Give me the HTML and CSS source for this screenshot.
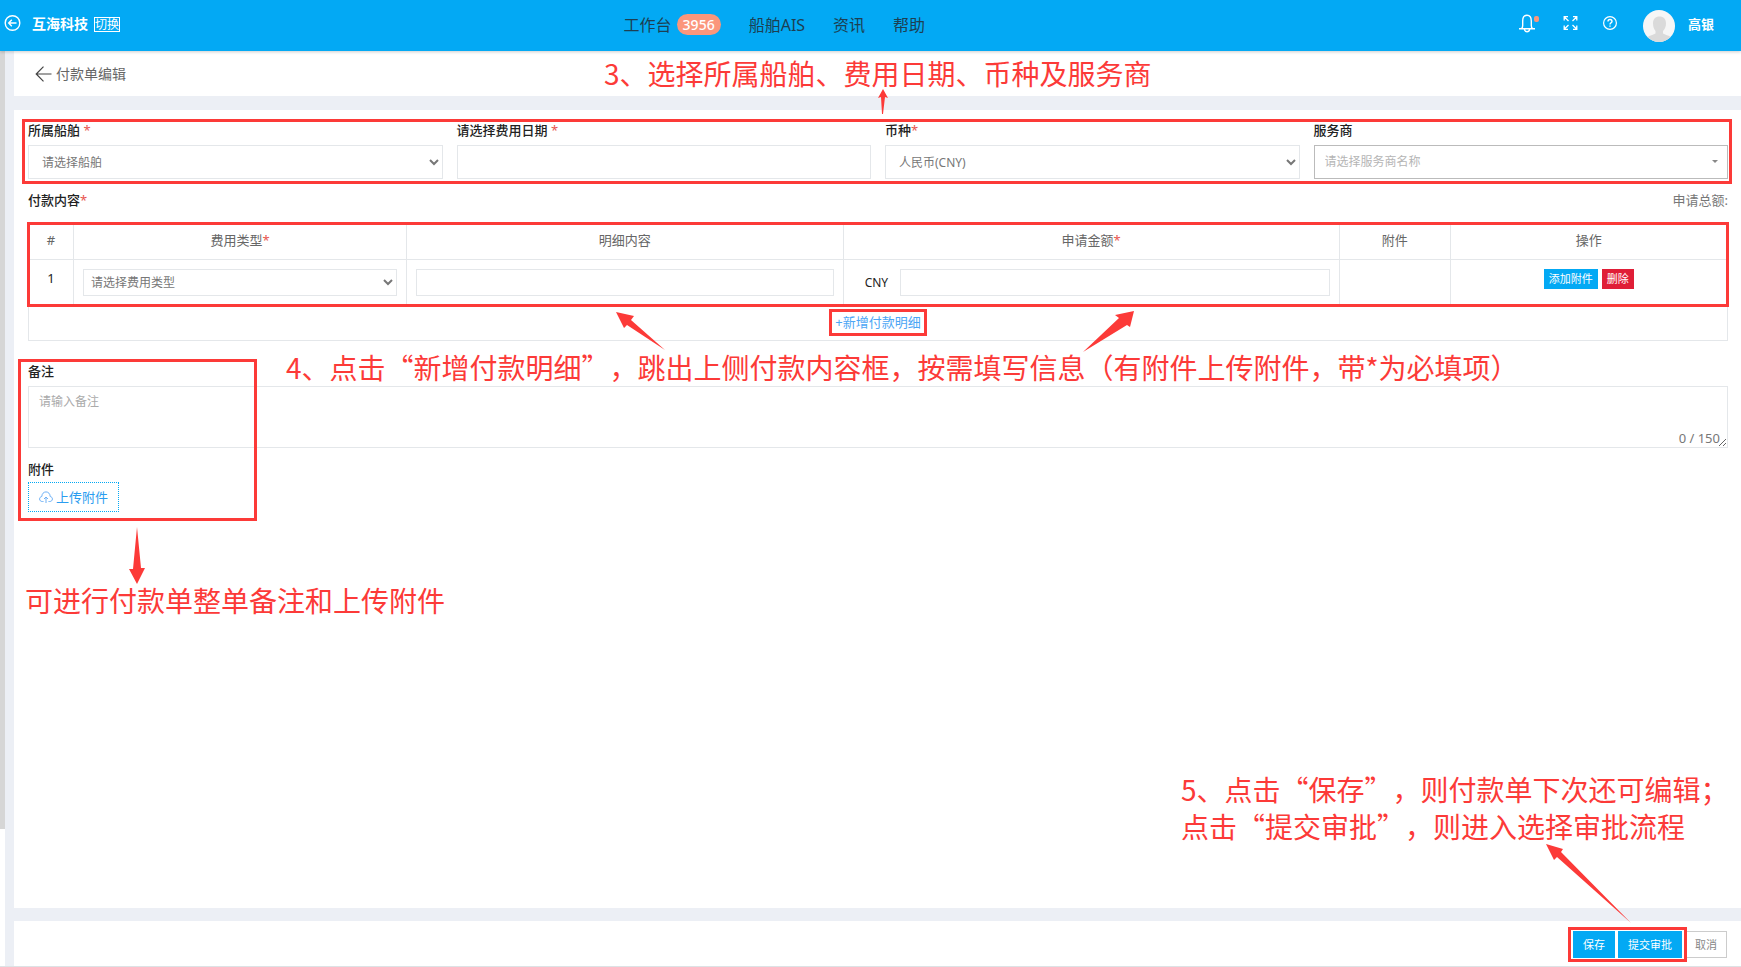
FILE: index.html
```html
<!DOCTYPE html>
<html lang="zh-CN">
<head>
<meta charset="utf-8">
<meta name="viewport" content="width=device-width, initial-scale=1">
<title>付款单编辑</title>
<link rel="stylesheet" href="styles.css">
</head>
<body>
<header class="topbar">
  <div class="brand">
    <button class="icon-btn" type="button" aria-label="收起菜单">
      <svg width="18" height="18" viewBox="0 0 18 18" fill="none" stroke="#fff" stroke-width="1.4"><circle cx="8.500" cy="9" r="7.3"/><path d="M12.500 9H5M7.800 5.800L4.700 9l3.100 3.2"/></svg>
    </button>
    <strong class="brand-name">互海科技</strong>
    <a class="switch" href="#">切换</a>
  </div>
  <nav class="nav">
    <a href="#">工作台 <span class="badge">3956</span></a>
    <a href="#">船舶AIS</a>
    <a href="#">资讯</a>
    <a href="#">帮助</a>
  </nav>
  <div class="tools">
    <button class="icon-btn" type="button" aria-label="通知">
      <svg width="20" height="20" viewBox="0 0 20 20" fill="none" stroke="#fff" stroke-width="1.4"><path d="M0 15.800h16M2.500 15.800c1-1 1.200-2 1.200-3.300V8C3.700 4.500 5.300 2.200 8 2.200s4.300 2.300 4.300 5.800v4.500c0 1.300.2 2.300 1.200 3.300M5.300 16.100c.3 1.700 1.300 2.700 2.700 2.700s2.400-1 2.700-2.700"/><rect x="15" y="3" width="5" height="6" rx="2" fill="#fb967b" stroke="none"/></svg>
    </button>
    <button class="icon-btn" type="button" aria-label="全屏">
      <svg width="16" height="16" viewBox="0 0 16 16" fill="none" stroke="#fff" stroke-width="1.300"><path d="M1.200 5.500V1.700H5M1.200 1.700L5.500 6M10 1.700h3.800v3.800M13.800 1.700L9.500 6M1.200 10.500v3.800H5M1.200 14.300L5.500 10M13.800 10.500v3.800H10M13.800 14.300L9.500 10"/></svg>
    </button>
    <button class="icon-btn" type="button" aria-label="帮助">
      <svg width="16" height="16" viewBox="0 0 16 16" fill="none" stroke="#fff" stroke-width="1.200"><circle cx="7" cy="8" r="6.400"/><path d="M5 6.600C5 5.300 5.800 4.500 7 4.500s2 .8 2 1.900c0 1.300-2 1.500-2 3.100M7 10.500v1.300" stroke-width="1.400"/></svg>
    </button>
    <a class="user" href="#">
      <svg width="32" height="32" viewBox="0 0 32 32"><defs><clipPath id="face"><circle cx="16" cy="16" r="16"/></clipPath></defs><g clip-path="url(#face)"><path fill="#f6f6f6" d="M0 0h32v32H0z"/><path fill="#dadada" d="M16.500 6.500c4 0 6.500 2.600 6.500 6.700 0 3.500-1.200 6-3 7.800v2.500c2.500 1.500 7 2 8.500 4.500V32H4v-4c1.500-2.500 6-3 8.500-4.500V21c-1.500-1.800-2.500-4.300-2.500-7.800 0-4.100 2.500-6.700 6.500-6.700z"/></g></svg>
      <strong>高银</strong>
    </a>
  </div>
</header>

<div class="workspace">
  <div class="rail"><div class="rail-thumb"></div></div>
  <div class="page">
    <div class="titlebar">
      <a class="back" href="#">
        <svg width="17" height="16" viewBox="0 0 17 16" fill="none" stroke="#444" stroke-width="1.200"><path d="M16.500 8H1.200M8.500.6L1.200 8l7.300 7.400"/></svg>
        <span>付款单编辑</span>
      </a>
    </div>

    <main class="card">
      <form id="payment">
        <div class="fields ring ring-fields">
          <div class="field">
            <label for="ship">所属船舶 <i>*</i></label>
            <select id="ship" class="control"><option>请选择船舶</option></select>
          </div>
          <div class="field">
            <label for="date">请选择费用日期 <i>*</i></label>
            <input id="date" class="control" type="text">
          </div>
          <div class="field">
            <label for="currency">币种<i>*</i></label>
            <select id="currency" class="control"><option>人民币(CNY)</option></select>
          </div>
          <div class="field">
            <label for="vendor">服务商</label>
            <div class="combo">
              <select id="vendor" class="control"><option>请选择服务商名称</option></select>
              <span class="caret"></span>
            </div>
          </div>
        </div>

        <div class="section-head">
          <h2>付款内容<i>*</i></h2>
          <span>申请总额:</span>
        </div>

        <div class="ring ring-table">
          <table class="items">
            <colgroup><col class="c-no"><col class="c-type"><col class="c-detail"><col class="c-amount"><col class="c-file"><col class="c-action"></colgroup>
            <thead>
              <tr><th>#</th><th>费用类型<i>*</i></th><th>明细内容</th><th>申请金额<i>*</i></th><th>附件</th><th>操作</th></tr>
            </thead>
            <tbody>
              <tr>
                <td class="no">1</td>
                <td><select class="control small" aria-label="费用类型"><option>请选择费用类型</option></select></td>
                <td><input class="control small" type="text" aria-label="明细内容"></td>
                <td><label class="amount">CNY <input class="control small" type="text"></label></td>
                <td></td>
                <td><div class="actions"><button class="btn tiny primary" type="button">添加附件</button><button class="btn tiny danger" type="button">删除</button></div></td>
              </tr>
            </tbody>
          </table>
        </div>
        <div class="add-row"><a class="ring ring-add" href="#">+新增付款明细</a></div>

        <div class="extras ring ring-extras">
          <label for="remark">备注</label>
          <div class="remark">
            <textarea id="remark" placeholder="请输入备注"></textarea>
            <span class="count">0 / 150</span>
          </div>
          <h3>附件</h3>
          <button class="upload" type="button">
            <svg width="14" height="12" viewBox="0 0 14 12" fill="none" stroke="#6fb1f5" stroke-width="1"><path d="M4.500 10.500H3.300C1.700 10.500.6 9.500.6 8c0-1.300.9-2.300 2.200-2.500C2.900 2.800 4.600.9 7 .9s4.100 1.900 4.200 4.600c1.300.2 2.200 1.200 2.200 2.500 0 1.500-1.100 2.500-2.700 2.500H9.500M7 12V6.200M5 8l2-2 2 2"/></svg>
            上传附件
          </button>
        </div>
      </form>
    </main>

    <footer class="footer">
      <div class="ring ring-save">
        <button class="btn primary" type="submit" form="payment">保存</button>
        <button class="btn primary" type="button">提交审批</button>
      </div>
      <button class="btn plain" type="button">取消</button>
    </footer>
  </div>
</div>

<p class="note note-fields">3、选择所属船舶、费用日期、币种及服务商</p>
<p class="note note-items">4、点击“新增付款明细”，跳出上侧付款内容框，按需填写信息（有附件上传附件，带*为必填项）</p>
<p class="note note-extras">可进行付款单整单备注和上传附件</p>
<p class="note note-save">5、点击“保存”，则付款单下次还可编辑；<br>点击“提交审批”，则进入选择审批流程</p>
<svg class="arrows" width="1741" height="967" viewBox="0 0 1741 967" fill="#fc3a38" aria-hidden="true">
  <path d="M883 89l5 9-3-1-2 17h-1l-1-17-3 1z"/>
  <path d="M616 312l18 4-3 4 34 30-38-25-3 3z"/>
  <path d="M1134 311l-4 16-3-2-44 27 36-34-4-3z"/>
  <path d="M137 527l4 41h4l-8 16-8-15h4z"/>
  <path d="M1546 844l17 5-2 3 70 71-74-66-3 3z"/>
</svg>
</body>
</html>
```

FILE: styles.css
```css
* { box-sizing: border-box; }

body {
  position: relative;
  display: flex;
  flex-direction: column;
  min-height: 100vh;
  margin: 0;
  overflow-x: hidden;
  background: #eceff5;
  color: #222;
  font: 13px/20px "Noto Sans", "Noto Sans CJK SC", sans-serif;
}

a { color: inherit; text-decoration: none; }
i { color: #e8554f; font-style: normal; font-weight: 400; }
button, input, select, textarea { font: inherit; border-radius: 0; }
button { cursor: pointer; }
svg { display: block; }

/* top bar */
.topbar {
  position: relative;
  z-index: 1;
  display: grid;
  grid-template-columns: 36% 1fr auto;
  align-items: center;
  column-gap: 4px;
  height: 51px;
  padding: 0 27px 6px 4px;
  background: #03a9f4;
  box-shadow: 0 1px 3px rgba(0, 0, 0, .2);
}
.icon-btn { padding: 0; border: 0; background: none; }
.brand { display: flex; align-items: center; color: #fff; }
.brand-name { margin: 2px 6px 0 10px; font-size: 14px; }
.switch {
  margin-top: 4px;
  border: 1px solid #fff;
  font-size: 12px;
  line-height: 13px;
}
.nav {
  display: flex;
  align-items: center;
  gap: 28px;
  padding-top: 4px;
  color: #1d3f52;
  font-size: 16px;
}
.nav a { display: flex; align-items: center; gap: 5px; }
.badge {
  padding: 0 6px;
  border-radius: 11px;
  background: #fb967b;
  color: #fff;
  font-size: 14px;
  font-weight: 500;
  line-height: 21px;
}
.tools { display: flex; align-items: center; gap: 24px; }
.user {
  display: flex;
  align-items: center;
  gap: 13px;
  padding-top: 6px;
  color: #fff;
}
.user strong { line-height: 18px; padding-bottom: 3px; }

/* page frame */
.workspace { display: flex; flex: 1; border-bottom: 1px solid #dde2e5; }
.rail { width: 5px; background: #fff; }
.rail-thumb { height: 85%; background: #d6d6d6; }
.page {
  display: flex;
  flex: 1;
  flex-direction: column;
  min-width: 0;
  margin-left: 9px;
}
.titlebar { height: 45px; padding: 13px 21px; background: #fff; }
.back {
  display: inline-flex;
  align-items: center;
  gap: 4px;
  color: #666;
  font-size: 14px;
}
.card { flex: 1; margin: 14px 0 13px; padding: 11px 13px 11px 14px; background: #fff; }

/* form */
.fields { display: grid; grid-template-columns: repeat(4, 1fr); gap: 14px; }
.field label, .extras > label, .extras h3 {
  display: block;
  margin: 0 0 6px;
  font-size: 13px;
  font-weight: 500;
  line-height: 18px;
}
.control {
  display: block;
  width: 100%;
  height: 34px;
  padding: 0 9px;
  border: 1px solid #e4e7ea;
  background: #fff;
  color: #777;
  font-size: 12px;
}
select.control { padding-right: 3px; }
.control.small { height: 27px; padding: 0 3px; }
.combo { position: relative; }
.combo .control { padding-left: 10px; border-color: #bbb; color: #b5b5b5; appearance: none; }
.caret {
  position: absolute;
  top: 15px;
  right: 10px;
  border: 3px solid transparent;
  border-top-color: #888;
}
.section-head {
  display: flex;
  justify-content: space-between;
  margin: 11px 0 13px;
  color: #777;
}
.section-head h2 { margin: 0; color: #222; font-size: 13px; font-weight: 500; }

.items { width: 100%; border-collapse: collapse; table-layout: fixed; }
.c-no { width: 45px; }
.c-type { width: 19.6%; }
.c-detail { width: 25.7%; }
.c-amount { width: 29.2%; }
.c-file { width: 111px; }
.items th, .items td { border: 1px solid #e4e7ea; }
.items th { height: 36px; padding: 0 0 3px; color: #666; font-weight: 400; }
.items td { height: 46px; padding: 9px; vertical-align: top; }
.items .no { line-height: 18px; text-align: center; }
.amount {
  display: flex;
  align-items: center;
  gap: 12px;
  padding-left: 12px;
  font-size: 12px;
}
.amount .control { flex: 1; }
.actions { display: flex; justify-content: center; align-items: flex-end; gap: 4px; }
.add-row {
  padding: 6px 0 8px;
  border: 1px solid #e4e7ea;
  border-top: 0;
  color: #4ba6f5;
  text-align: center;
}
.add-row a { display: inline-block; }

.extras { margin-top: 21px; }
.remark { position: relative; margin-bottom: 12px; }
.remark textarea {
  display: block;
  width: 100%;
  height: 62px;
  padding: 5px 10px;
  border: 1px solid #e4e7ea;
  font-size: 12px;
}
.remark textarea::placeholder { color: #aaa; }
.count { position: absolute; right: 8px; bottom: 0; color: #777; }
.extras h3 { margin-bottom: 4px; }
.upload {
  display: flex;
  align-items: center;
  gap: 3px;
  height: 30px;
  padding: 0 10px;
  border: 1px dotted #03a9f4;
  background: #fff;
  color: #2a9df0;
}

/* buttons */
.btn {
  height: 27px;
  padding: 0 9px;
  border: 1px solid transparent;
  font-size: 11px;
  line-height: 16px;
}
.btn.tiny { height: 20px; padding: 0 4px; }
.primary { background: #03a9f4; color: #fff; }
.danger { background: #e01e37; color: #fff; }
.plain { border-color: #ccc; background: #fff; color: #888; }
.footer {
  display: flex;
  justify-content: flex-end;
  align-items: flex-start;
  gap: 3px;
  height: 45px;
  padding: 10px 14px 8px;
  background: #fff;
}
.ring-save { display: flex; gap: 3px; }

/* red guide marks */
.ring { position: relative; }
.ring::after {
  content: "";
  position: absolute;
  z-index: 2;
  border: 3px solid #fc3a38;
  pointer-events: none;
}
.ring-fields::after { inset: -2px -4px -5px -6px; }
.ring-table::after { inset: -1px; }
.ring-add::after { inset: -3px -6px -4px; }
.ring-extras::after { top: -3px; bottom: -9px; left: -10px; width: 233px; }
.ring-save::after { inset: -4px -5px; }
.note {
  position: absolute;
  z-index: 3;
  margin: 0;
  color: #fc3a38;
  font: 28px/37px "Noto Sans CJK SC", sans-serif;
  text-spacing-trim: space-all;
  white-space: nowrap;
}
.note-fields { top: 55px; left: 604px; }
.note-items { top: 349px; left: 286px; }
.note-extras { top: 582px; left: 25px; }
.note-save { top: 771px; left: 1181px; }
.arrows { position: absolute; z-index: 3; top: 0; left: 0; pointer-events: none; }
```
